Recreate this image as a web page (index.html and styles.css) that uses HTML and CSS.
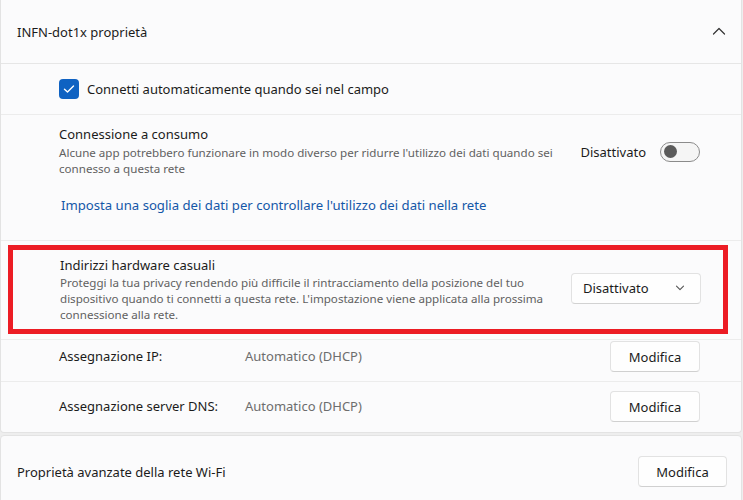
FILE: index.html
```html
<!DOCTYPE html>
<html lang="it">
<head>
<meta charset="utf-8">
<link rel="stylesheet" href="styles.css">
</head>
<body>
<div class="card main">
  <div class="header">
    <span class="title">INFN-dot1x proprietà</span>
    <svg class="chev-up" width="14" height="8" viewBox="0 0 14 8"><path d="M1.5 7 L7 1.5 L12.5 7" fill="none" stroke="#333" stroke-width="1.2" stroke-linecap="round" stroke-linejoin="round"/></svg>
  </div>
  <div class="row auto">
    <span class="check"><svg width="12" height="10" viewBox="0 0 12 10"><path d="M1.5 5.2 L4.5 8 L10.5 2" fill="none" stroke="#fff" stroke-width="1.4" stroke-linecap="round" stroke-linejoin="round"/></svg></span>
    <span class="label">Connetti automaticamente quando sei nel campo</span>
  </div>
  <div class="metered">
    <div class="setting">
      <div class="texts">
        <div class="label">Connessione a consumo</div>
        <div class="desc">Alcune app potrebbero funzionare in modo diverso per ridurre l'utilizzo dei dati quando sei connesso a questa rete</div>
      </div>
      <div class="control">
        <span class="label">Disattivato</span>
        <span class="toggle"><span class="thumb"></span></span>
      </div>
    </div>
    <div class="link">Imposta una soglia dei dati per controllare l'utilizzo dei dati nella rete</div>
  </div>
  <div class="hw">
    <div class="highlight">
      <div class="texts">
        <div class="label">Indirizzi hardware casuali</div>
        <div class="desc">Proteggi la tua privacy rendendo più difficile il rintracciamento della posizione del tuo dispositivo quando ti connetti a questa rete. L'impostazione viene applicata alla prossima connessione alla rete.</div>
      </div>
      <div class="dropdown">
        <span class="label">Disattivato</span>
        <svg width="10" height="6" viewBox="0 0 10 6"><path d="M1.5 1.2 L5 4.7 L8.5 1.2" fill="none" stroke="#555" stroke-width="1.1" stroke-linecap="round" stroke-linejoin="round"/></svg>
      </div>
    </div>
  </div>
  <div class="row kv">
    <span class="label key">Assegnazione IP:</span>
    <span class="value">Automatico (DHCP)</span>
    <span class="btn">Modifica</span>
  </div>
  <div class="row kv last">
    <span class="label key">Assegnazione server DNS:</span>
    <span class="value">Automatico (DHCP)</span>
    <span class="btn">Modifica</span>
  </div>
</div>
<div class="card adv">
  <span class="label">Proprietà avanzate della rete Wi-Fi</span>
  <span class="btn">Modifica</span>
</div>
</body>
</html>
```
FILE: styles.css
```css
* { box-sizing: border-box; }
html, body { margin: 0; padding: 0; }
body {
  background: #eeeeee;
  font-family: "Noto Sans", "Open Sans", sans-serif;
  font-size: 13px;
  color: #1b1b1b;
  width: 743px;
  height: 500px;
  overflow: hidden;
}
.card {
  background: #fbfbfc;
  border: 1px solid #e3e3e3;
  width: 742px;
}
.main {
  border-top: none;
  height: 433px;
  border-radius: 0 0 4px 4px;
}
.header {
  height: 64px;
  display: flex;
  align-items: center;
  justify-content: space-between;
  padding: 0 15px 0 16px;
  border-bottom: 1px solid #e6e6e6;
}
.title { font-size: 13px; }
.chev-up { margin-top: -2px; }
.row {
  display: flex;
  align-items: center;
  padding-left: 58px;
}
.auto {
  height: 51px;
  border-bottom: 1px solid #ececec;
  gap: 8px;
}
.check {
  width: 20px;
  height: 20px;
  border-radius: 4px;
  background: #0f62c2;
  display: flex;
  align-items: center;
  justify-content: center;
}
.metered {
  height: 126px;
  padding: 9px 41px 0 58px;
  border-bottom: 1px solid #ececec;
}
.setting {
  display: flex;
  align-items: center;
  justify-content: space-between;
}
.texts { width: 505px; }
.desc {
  font-size: 11.6px;
  color: #616161;
  line-height: 16px;
  margin-top: 1px;
}
.setting .label { line-height: 20px; }
.control {
  display: flex;
  align-items: center;
  gap: 14px;
  margin-top: 2px;
}
.toggle {
  width: 40px;
  height: 20px;
  border: 1px solid #8b8b8b;
  border-radius: 10px;
  background: #f5f5f5;
  display: flex;
  align-items: center;
  padding-left: 3px;
}
.thumb {
  width: 13px;
  height: 13px;
  border-radius: 50%;
  background: #5b5b5b;
}
.link {
  color: #1457a8;
  font-size: 13.15px;
  margin-top: 19px;
  padding-left: 2px;
}
.hw {
  height: 99px;
  padding: 4px 0 0 7px;
  border-bottom: 1px solid #ececec;
}
.highlight {
  width: 720px;
  height: 89px;
  border: 5px solid #ec1c24;
  display: flex;
  align-items: center;
  justify-content: space-between;
  padding: 0 22px 0 47px;
}
.highlight .texts { width: 490px; margin-top: 0; }
.highlight .label { line-height: 17px; }
.dropdown {
  width: 130px;
  height: 31px;
  background: #fefefe;
  border: 1px solid #e2e2e2;
  border-bottom-color: #d2d2d2;
  border-radius: 4px;
  display: flex;
  align-items: center;
  justify-content: space-between;
  padding: 0 15px 0 11px;
  margin-top: -3px;
}
.kv {
  height: 42px;
  border-bottom: 1px solid #ececec;
  padding-right: 41px;
  align-items: flex-start;
  padding-top: 1px;
}
.kv .key, .kv .value { line-height: 31px; }
.kv.last {
  height: 50px;
  border-bottom: none;
  padding-top: 9px;
}
.key { width: 186px; }
.value { color: #6d6d6d; flex: 1; }
.btn {
  width: 90px;
  height: 31px;
  background: #fefefe;
  border: 1px solid #e2e2e2;
  border-bottom-color: #d0d0d0;
  border-radius: 4px;
  display: flex;
  align-items: center;
  justify-content: center;
}
.adv {
  margin-top: 2px;
  height: 70px;
  display: flex;
  align-items: center;
  justify-content: space-between;
  padding: 3px 14px 0 16px;
  border-radius: 4px 4px 0 0;
}
.adv .btn { width: 89px; }
```
